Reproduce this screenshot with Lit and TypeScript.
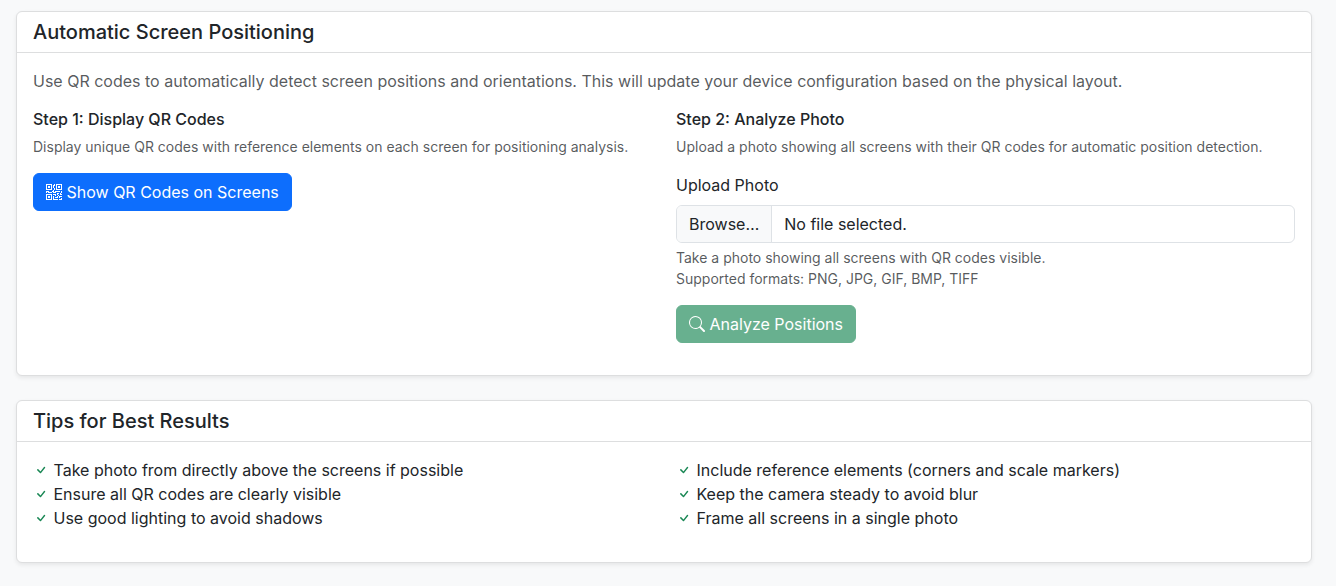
import { LitElement, html, css, svg } from "lit";
import { customElement, state } from "lit/decorators.js";

const icons = {
  qr: svg`<path d="M2 2h2v2H2z"/><path d="M6 0v6H0V0zM5 1H1v4h4zM4 12H2v2h2z"/><path d="M6 10v6H0v-6zm-5 1v4h4v-4zm11-9h2v2h-2z"/><path d="M10 0v6h6V0zm5 1v4h-4V1zM8 1V0h1v2H8v2H7V1zm0 5V4h1v2zM6 8V7h1V6h1v2h1V7h5v1h-4v1H7V8zm0 0v1H2V8H1v1H0V7h3v1zm10 1h-1V7h1zm-1 0h-1v2h2v-1h-1zm-4 0h2v1h-1v1h-1zm2 3v-1h-1v1h-1v1H9v1h3v-2zm0 0h3v1h-2v1h-1zm-4-1v1h1v-2H7v1z"/><path d="M7 12h1v3h4v1H7zm9 2v2h-3v-1h2v-1z"/>`,
  search: svg`<path d="M11.742 10.344a6.5 6.5 0 1 0-1.397 1.398h-.001q.044.06.098.115l3.85 3.85a1 1 0 0 0 1.415-1.414l-3.85-3.85a1 1 0 0 0-.115-.1zM12 6.5a5.5 5.5 0 1 1-11 0 5.5 5.5 0 0 1 11 0"/>`,
  check: svg`<path d="M10.97 4.97a.75.75 0 0 1 1.07 1.05l-3.99 4.99a.75.75 0 0 1-1.08.02L4.324 8.384a.75.75 0 1 1 1.06-1.06l2.094 2.093 3.473-4.425z"/>`,
};

const icon = (name: keyof typeof icons) =>
  html`<svg class="icon" viewBox="0 0 16 16" aria-hidden="true">${icons[name]}</svg>`;

const tips = [
  [
    "Take photo from directly above the screens if possible",
    "Ensure all QR codes are clearly visible",
    "Use good lighting to avoid shadows",
  ],
  [
    "Include reference elements (corners and scale markers)",
    "Keep the camera steady to avoid blur",
    "Frame all screens in a single photo",
  ],
];

@customElement("app-root")
export class AppRoot extends LitElement {
  @state() private fileName = "";

  static styles = css`
    :host {
      display: flex;
      flex-direction: column;
      gap: 24px;
      box-sizing: border-box;
      min-height: 100vh;
      padding: 11px 24px 23px 16px;
      background: #f8f9fa;
      color: #212529;
      font: 400 16px/24px Inter, "Liberation Sans", sans-serif;
    }
    *, *::before, *::after { box-sizing: border-box; }
    h2, h3, p, ul { margin: 0; font-weight: 400; }
    .card {
      background: #fff;
      border: 1px solid #dddedf;
      border-radius: 6px;
      box-shadow: 0 2px 4px rgba(0, 0, 0, 0.075);
    }
    .card-header {
      padding: 8px 16px;
      border-bottom: 1px solid #dddedf;
    }
    .card-title { font-size: 20px; line-height: 24px; font-weight: 500; }
    .card-body { padding: 16px 16px 32px; }
    .muted { color: rgba(33, 37, 41, 0.75); }
    .small { font-size: 14px; line-height: 21px; }
    .columns {
      display: grid;
      grid-template-columns: repeat(auto-fit, minmax(min(100%, 320px), 1fr));
      gap: 24px;
    }
    .intro { margin-bottom: 16px; }
    .step { display: flex; flex-direction: column; align-items: flex-start; gap: 16px; }
    .step-title { font-size: 16px; line-height: 20px; font-weight: 500; margin-bottom: 7px; }
    .icon {
      width: 16px;
      height: 16px;
      fill: currentColor;
      vertical-align: -2px;
    }
    .btn {
      font: inherit;
      color: #fff;
      padding: 6px 12px;
      border: 1px solid transparent;
      border-radius: 6px;
      cursor: pointer;
    }
    .btn:disabled { opacity: 0.65; cursor: default; }
    .primary { background: #0d6efd; border-color: #0d6efd; }
    .success { background: #198754; border-color: #198754; }
    .field { width: 100%; }
    .field-label { display: block; margin-bottom: 8px; }
    .file {
      display: grid;
      margin-bottom: 4px;
      border: 1px solid #dee2e6;
      border-radius: 6px;
      overflow: hidden;
    }
    .file:focus-within { border-color: #86b7fe; }
    .file-input, .file-face { grid-area: 1 / 1; min-width: 0; }
    .file-input { width: 100%; height: 100%; opacity: 0; cursor: pointer; }
    .file-face { display: flex; pointer-events: none; }
    .file-browse {
      padding: 6px 12px;
      background: #f8f9fa;
      border-right: 1px solid #dee2e6;
    }
    .file-name { padding: 6px 12px; }
    .tips { list-style: none; padding: 0; }
    .tips .icon { color: #198754; }
  `;

  private onFile(e: Event) {
    this.fileName = (e.target as HTMLInputElement).files?.[0]?.name ?? "";
  }

  render() {
    return html`
      <section class="card">
        <header class="card-header">
          <h2 class="card-title">Automatic Screen Positioning</h2>
        </header>
        <div class="card-body">
          <p class="intro muted">
            Use QR codes to automatically detect screen positions and orientations. This will update
            your device configuration based on the physical layout.
          </p>
          <div class="columns">
            <div class="step">
              <div>
                <h3 class="step-title">Step 1: Display QR Codes</h3>
                <p class="small muted">
                  Display unique QR codes with reference elements on each screen for positioning analysis.
                </p>
              </div>
              <button class="btn primary" type="button">${icon("qr")} Show QR Codes on Screens</button>
            </div>
            <div class="step">
              <div>
                <h3 class="step-title">Step 2: Analyze Photo</h3>
                <p class="small muted">
                  Upload a photo showing all screens with their QR codes for automatic position detection.
                </p>
              </div>
              <div class="field">
                <label class="field-label" for="photo">Upload Photo</label>
                <div class="file">
                  <input
                    class="file-input"
                    id="photo"
                    type="file"
                    accept="image/*"
                    aria-describedby="photo-help"
                    @change=${this.onFile}
                  />
                  <div class="file-face" aria-hidden="true">
                    <span class="file-browse">Browse…</span>
                    <span class="file-name">${this.fileName || "No file selected."}</span>
                  </div>
                </div>
                <div class="small muted" id="photo-help">
                  Take a photo showing all screens with QR codes visible.<br />
                  Supported formats: PNG, JPG, GIF, BMP, TIFF
                </div>
              </div>
              <button class="btn success" type="button" ?disabled=${!this.fileName}>
                ${icon("search")} Analyze Positions
              </button>
            </div>
          </div>
        </div>
      </section>
      <section class="card">
        <header class="card-header">
          <h2 class="card-title">Tips for Best Results</h2>
        </header>
        <div class="card-body columns">
          ${tips.map(
            (list) => html`<ul class="tips">
              ${list.map((tip) => html`<li>${icon("check")} ${tip}</li>`)}
            </ul>`
          )}
        </div>
      </section>
    `;
  }
}
